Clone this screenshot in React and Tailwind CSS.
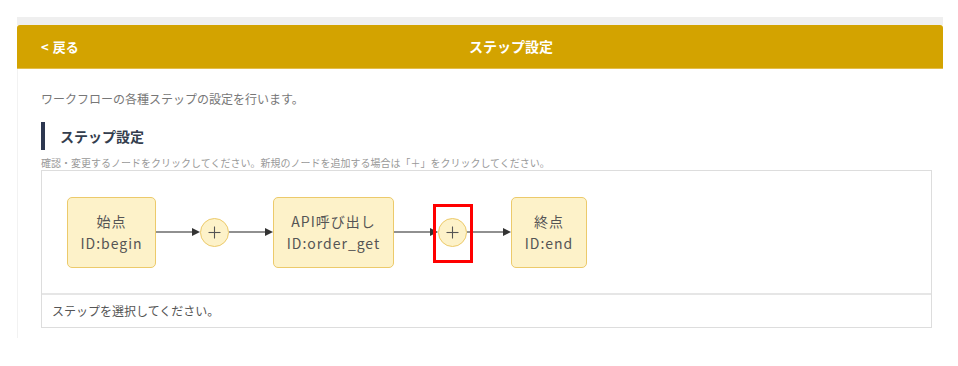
import React from "react";

const FONT = { fontFamily: '"Noto Sans CJK JP", "Noto Sans", sans-serif' };

function Node({ title, id, w }) {
  return (
    <div
      className={`flex h-[71px] shrink-0 flex-col items-center justify-center rounded-[5px] border border-[#ecca6b] bg-[#fdf2c9] text-[14px] leading-[22px] tracking-[0.07em] text-[#555] ${w}`}
    >
      <div>{title}</div>
      <div>{id}</div>
    </div>
  );
}

function Arrow() {
  return (
    <svg width="44" height="10" viewBox="0 0 44 10" className="block shrink-0">
      <line x1="0" y1="5" x2="38" y2="5" stroke="#6b6b6b" strokeWidth="1.5" />
      <polygon points="36,1 44,5 36,9" fill="#333" />
    </svg>
  );
}

function Plus({ highlight }) {
  return (
    <div className="relative h-[29px] w-[29px] shrink-0">
      <div className="flex h-[29px] w-[29px] items-center justify-center rounded-full border border-[#ecca6b] bg-[#fdf2c9]">
        <svg width="13" height="13" viewBox="0 0 13 13">
          <line x1="6.5" y1="0.5" x2="6.5" y2="12.5" stroke="#555" strokeWidth="1.1" />
          <line x1="0.5" y1="6.5" x2="12.5" y2="6.5" stroke="#555" strokeWidth="1.1" />
        </svg>
      </div>
      {highlight && (
        <div className="absolute left-[-5px] top-[-14px] z-10 h-[59px] w-[40px] border-[3px] border-[#ff0000]" />
      )}
    </div>
  );
}

export default function App() {
  return (
    <div className="min-h-[366px] bg-white pt-[17px]" style={FONT}>
      <div className="ml-[17px] w-[926px]">
        <div className="h-[8px] bg-[#efefef]" />
        <div className="flex h-[44px] items-center rounded-t-[3px] border-b border-[#e3bd4a] bg-[#d3a300] px-[24px] text-white">
          <div className="flex w-[62px] items-center gap-[4px] text-[13px] font-bold">
            <span>&lt;</span>
            <span>戻る</span>
          </div>
          <div className="flex-1 text-center text-[14px] font-bold">ステップ設定</div>
        </div>
        <div className="border-l border-[#f2f2f2] bg-white pb-[10px] pl-[23px] pr-[11px] pt-[21px]">
          <p className="text-[12px] leading-[18px] text-[#777]">
            ワークフローの各種ステップの設定を行います。
          </p>
          <div className="mt-[14px] flex h-[28px] items-center">
            <div className="h-[28px] w-[4px] bg-[#2d3750]" />
            <h2 className="ml-[15px] text-[14px] font-bold text-[#333d4d]">ステップ設定</h2>
          </div>
          <p className="mt-[6px] text-[10px] leading-[14px] text-[#999]">
            確認・変更するノードをクリックしてください。新規のノードを追加する場合は「＋」をクリックしてください。
          </p>
          <div className="border border-[#dddddd]">
            <div className="flex h-[122px] items-center pl-[25px]">
              <Node title="始点" id="ID:begin" w="w-[89px]" />
              <Arrow />
              <Plus />
              <Arrow />
              <Node title="API呼び出し" id="ID:order_get" w="w-[121px]" />
              <Arrow />
              <Plus highlight />
              <Arrow />
              <Node title="終点" id="ID:end" w="w-[76px]" />
            </div>
            <div className="flex h-[34px] items-center border-t-2 border-[#e6e6e6] pl-[10px] text-[12px] text-[#555]">
              ステップを選択してください。
            </div>
          </div>
        </div>
      </div>
    </div>
  );
}
